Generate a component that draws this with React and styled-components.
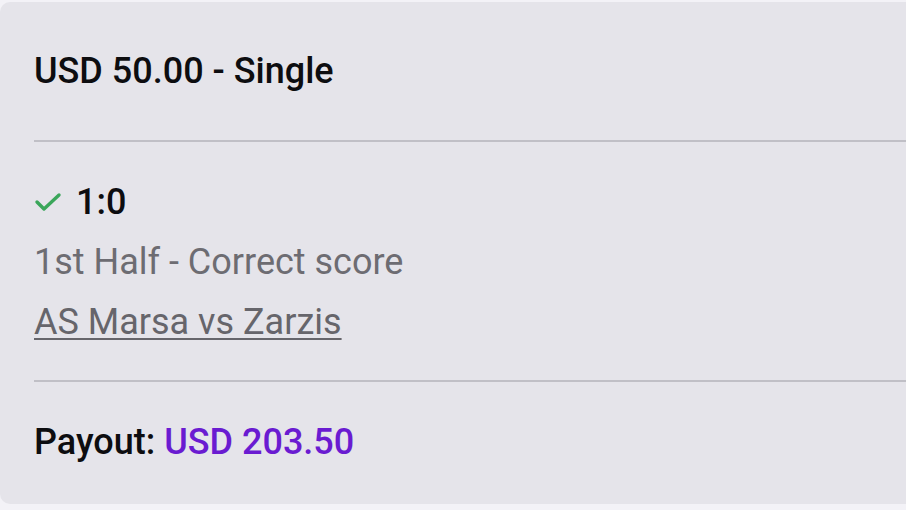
import React from 'react';
import styled, { createGlobalStyle } from 'styled-components';

const GlobalStyle = createGlobalStyle`
  html, body {
    margin: 0;
    padding: 0;
    background: #f3f2f7;
    font-family: Roboto, 'Liberation Sans', sans-serif;
  }
`;

const Page = styled.div`
  width: 906px;
  height: 510px;
  padding-top: 2px;
  box-sizing: border-box;
  overflow: hidden;
`;

const Card = styled.div`
  width: 920px;
  height: 502px;
  background: #e5e4ea;
  border-radius: 10px 0 0 10px;
  display: flex;
  flex-direction: column;
`;

const Section = styled.div`
  padding: ${(p) => p.$pad};
  padding-left: 34px;
  display: flex;
  flex-direction: column;
`;

const Divider = styled.div`
  height: 2px;
  margin-left: 34px;
  background: #c0bfc6;
`;

const Title = styled.div`
  font-size: 36px;
  line-height: 36px;
  font-weight: 500;
  color: #0d0d10;
`;

const Line = styled.div`
  display: flex;
  align-items: center;
  height: 60px;
  font-size: 36px;
  font-weight: ${(p) => (p.$strong ? 500 : 400)};
  color: ${(p) => (p.$muted ? '#6d6c72' : '#0d0d10')};
`;

const Check = styled.svg`
  width: 28px;
  height: 22px;
  margin-right: 14px;
`;

const MatchLink = styled.a`
  color: #66656b;
  text-decoration: underline;
  text-decoration-thickness: 2px;
  text-underline-offset: 4px;
`;

const Payout = styled.div`
  font-size: 36px;
  line-height: 36px;
  font-weight: 500;
  color: #0d0d10;
`;

const Amount = styled.span`
  color: #6a1bd1;
`;

const App = () => {
  return (
    <>
      <GlobalStyle />
      <Page>
        <Card>
          <Section $pad="51px 0 51px">
            <Title>USD 50.00 - Single</Title>
          </Section>
          <Divider />
          <Section $pad="30px 0 28px">
            <Line $strong>
              <Check viewBox="0 0 28 22">
                <polyline
                  points="3,11 10,18 25,4"
                  fill="none"
                  stroke="#3aa65a"
                  strokeWidth="3.4"
                  strokeLinecap="round"
                  strokeLinejoin="round"
                />
              </Check>
              1:0
            </Line>
            <Line $muted>1st Half - Correct score</Line>
            <Line $muted>
              <MatchLink>AS Marsa vs Zarzis</MatchLink>
            </Line>
          </Section>
          <Divider />
          <Section $pad="42px 0 42px">
            <Payout>
              Payout: <Amount>USD 203.50</Amount>
            </Payout>
          </Section>
        </Card>
      </Page>
    </>
  );
};

export default App;
